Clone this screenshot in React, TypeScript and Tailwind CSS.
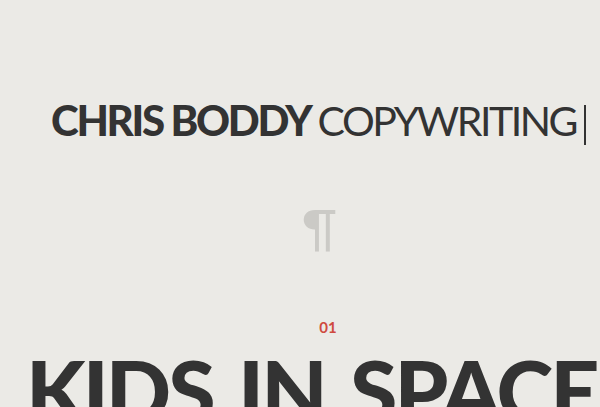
export default function App() {
  return (
    <div className="h-[407px] overflow-hidden bg-[#ebeae6] font-['Lato',sans-serif] text-[#333333]">
      {/* Masthead */}
      <header className="pt-[95px] pl-[51px] flex items-center">
        <h1 className="leading-[50px] whitespace-nowrap">
          <span className="text-[42px] font-black tracking-[-2.3px]">CHRIS BODDY</span>
          <span className="ml-[7px] text-[41px] font-normal tracking-[-2.5px]">COPYWRITING</span>
        </h1>
        <span className="ml-[8px] w-[2px] h-[40px] bg-[#333333]"></span>
      </header>

      {/* Divider mark */}
      <div className="mt-[46px] flex justify-center">
        <span className="text-[50px] leading-[52px] font-normal text-[#cbcac6] pl-[39px]">¶</span>
      </div>

      {/* Project */}
      <section className="mt-[65px]">
        <p className="text-center pl-[56px] text-[15px] leading-[18px] font-bold text-[#cf4a3f]">01</p>
        <h2 className="mt-[11px] pl-[26px] text-[86px] leading-[86px] font-black tracking-[-3px] [word-spacing:8px] whitespace-nowrap">
          KIDS IN SPACE
        </h2>
      </section>
    </div>
  );
}
